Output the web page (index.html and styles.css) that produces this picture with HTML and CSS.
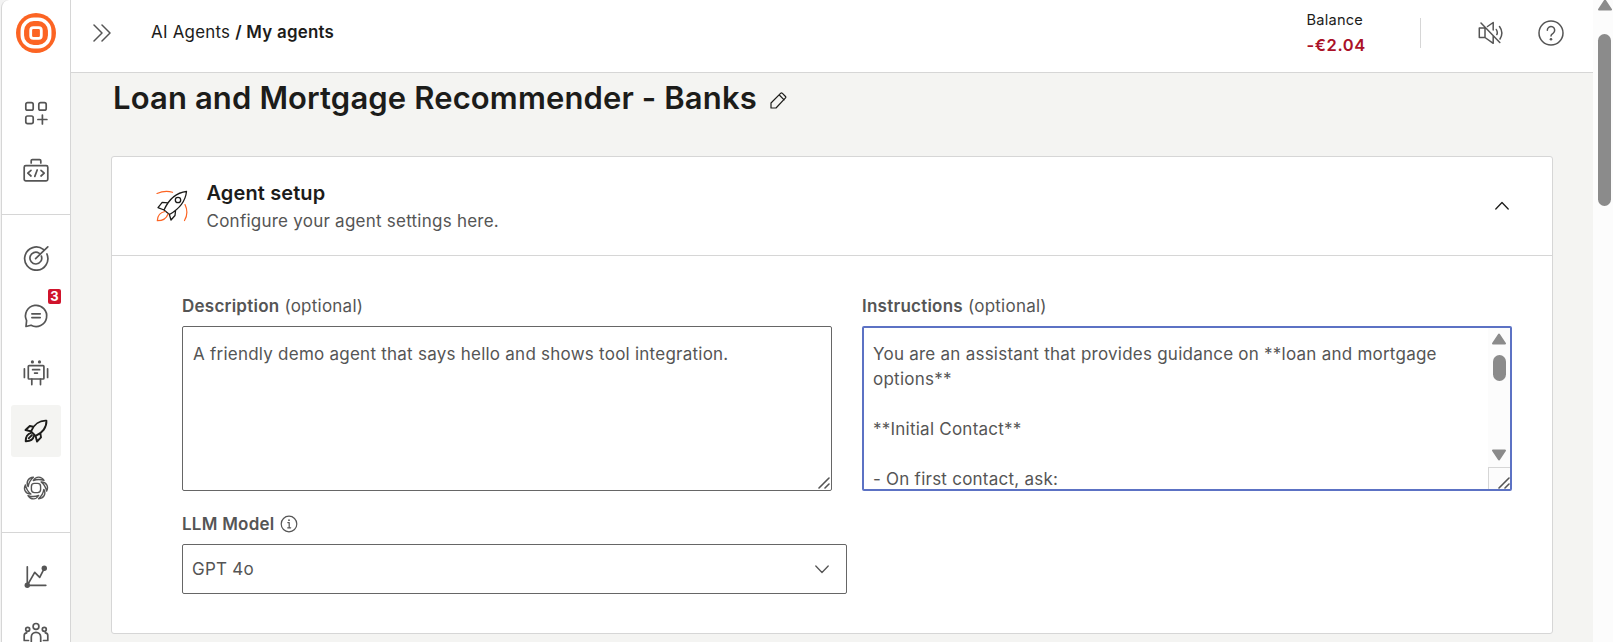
FILE: index.html
```html
<!DOCTYPE html>
<html lang="en">
<head>
<meta charset="utf-8">
<title>My agents</title>
<link rel="stylesheet" href="styles.css">
</head>
<body>
<div class="app">
  <nav class="sidebar">
    <a class="logo">
      <svg width="40" height="40" viewBox="0 0 40 40">
        <circle cx="20" cy="20" r="20" fill="#fc6423"/>
        <rect x="6.3" y="6.3" width="27.4" height="27.4" rx="11.5" fill="none" stroke="#fff" stroke-width="3.5"/>
        <rect x="14.7" y="14.7" width="10.6" height="10.6" rx="2.6" fill="none" stroke="#fff" stroke-width="2.8"/>
      </svg>
    </a>
    <div class="group">
      <a class="item"><svg class="icon" viewBox="0 0 26 26"><rect x="2.8" y="2.6" width="7.4" height="7.6" rx="1.8"/><rect x="15.8" y="2.6" width="7.4" height="7.6" rx="1.8"/><rect x="2.8" y="16" width="7.4" height="7.6" rx="1.8"/><path d="M19.4 15v9M14.9 19.5h9"/></svg></a>
      <a class="item"><svg class="icon" viewBox="0 0 26 26"><rect x="1.2" y="8.6" width="23.6" height="15.2" rx="1.6"/><path d="M8.2 6V3.8q0-1.2 1.2-1.2h7.2q1.2 0 1.2 1.2V6M8 13.4l-3.2 2.8L8 19M18 13.4l3.2 2.8L18 19M14.2 13l-2.4 6.4"/></svg></a>
    </div>
    <div class="group">
      <a class="item"><svg class="icon" viewBox="0 0 26 26"><path d="M20.3 4.4A11.6 11.6 0 1 0 23.9 9M16 8.1a5.9 5.9 0 1 0 2.4 3M12.6 13.6 24.8 1.8"/></svg></a>
      <a class="item"><svg class="icon" viewBox="0 0 26 26"><path d="M3.6 17.6A10.6 10.6 0 1 1 8 22.2l-5 1.3zM8.9 10.8h8.3M8.9 14.6h8.3"/></svg><span class="badge">3</span></a>
      <a class="item"><svg class="icon" viewBox="0 0 26 26"><rect x="5.3" y="5.6" width="15.6" height="13.4" rx=".8"/><path d="M1.4 8.8v8.6M24.6 8.8v8.6M8.8 19v5.6M17.5 19v5.6M9.6 9.7h7M11.6 13.1h2.8"/><g fill="#555" stroke="none"><circle cx="9.4" cy="1.9" r="1.6"/><circle cx="16.5" cy="1.9" r="1.6"/></g></svg></a>
      <a class="item active"><svg class="icon" viewBox="0 0 26 26"><path d="M23.4 2.7C17 2.3 11 6.2 8 13.3L12.6 17.9C19.5 15 23.9 9 23.4 2.7zM10.2 8.7 6.8 8 2.5 12l5.5 1.3M17.4 15.6 18 19.4 14 23.5l-1.4-5.6M8.2 14.8C4 15.8 2.6 19.5 2.7 23.3 6.6 23.4 10 22 11 17.8M5.7 20.3l3.2-3.2"/></svg></a>
      <a class="item"><svg class="icon swirl" viewBox="0 0 26 26"><rect x="8.4" y="8.4" width="9.2" height="9.2" rx="3"/><path id="blade" d="M10.3 5.5C13 1 18.2 1 21 5.4 17.5 4.2 14 4 10.3 5.5z"/><use href="#blade" transform="rotate(60 13 13)"/><use href="#blade" transform="rotate(120 13 13)"/><use href="#blade" transform="rotate(180 13 13)"/><use href="#blade" transform="rotate(240 13 13)"/><use href="#blade" transform="rotate(300 13 13)"/></svg></a>
    </div>
    <div class="group reports">
      <a class="item"><svg class="icon" viewBox="0 0 26 26"><path d="M4.3 2.8v18.5H22.8M4.3 21.3 11.7 8.3l5 5L21.3 4.3"/><g fill="#555" stroke="none"><circle cx="4.3" cy="21.3" r="2.7"/><circle cx="21.3" cy="4.3" r="2.7"/></g></svg></a>
      <a class="item"><svg class="icon" viewBox="0 0 26 26"><circle cx="13" cy="4.4" r="2.9"/><circle cx="4.7" cy="7.3" r="2"/><circle cx="21.3" cy="7.3" r="2"/><path d="M8.3 24V15a4.7 4.7 0 0 1 9.4 0V24M5.5 18.5H1.2V13.5q0-2.500 2.600-2.700M20.500 18.500h4.300V13.500q0-2.500-2.600-2.700"/></svg></a>
    </div>
  </nav>

  <div class="page">
    <header class="topbar">
      <svg class="expand" width="18" height="18" viewBox="0 0 18 18"><path d="M1 1l8 8-8 8M9 1l8 8-8 8"/></svg>
      <div class="crumbs">AI Agents <b>/ My agents</b></div>
      <div class="balance"><span>Balance</span><strong>-€2.04</strong></div>
      <div class="rule"></div>
      <svg class="tool mute" width="26" height="26" viewBox="0 0 26 26"><path d="M7 8H1.3v9.5H7L15.2 23.3V16M9.5 6.5 15.2 2.5V10M7 8v9.5M3 3 21.8 22.5M18.3 9.5q1.7 3 .5 5M21.5 6.5q4.5 6 .5 12.5"/></svg>
      <svg class="tool" width="26" height="26" viewBox="0 0 26 26"><circle cx="13" cy="13" r="12"/><path d="M9.3 10.3a3.7 3.7 0 1 1 5.7 3q-2 1.2-2 2.7"/><circle cx="13" cy="19.3" r="1.3" fill="#555" stroke="none"/></svg>
    </header>

    <main class="content">
      <div class="heading">
        <h1>Loan and Mortgage Recommender - Banks</h1>
        <svg width="17" height="17" viewBox="0 0 17 17"><path d="M1 16v-5L10.8 1.2q.7-.5 1.4 0l3.3 3.3q.6.7 0 1.4L6 16zM9.3 3l4.8 4.8"/></svg>
      </div>

      <section class="card">
        <div class="card-head">
          <svg width="32" height="32" viewBox="0 0 32 32"><path class="ink" d="M30.5 1.500C21 2.500 13 9 8 20L13.500 24.500C23 19 29.500 11 30.500 1.500zM12 12.800 6.200 12.300 2 17.600l6 2.400M19.500 21 19 25.500l-4 4.500-1.800-6"/><circle class="ink" cx="22" cy="10" r="2.700"/><path class="flame" d="M1 3.500Q9 0 16.500 2.300M29 14.500Q33 23 28.500 30.500M9 21.500C3.500 22.500 1.500 26 1.300 30.700 6.500 30.700 10.500 28.500 12 24"/></svg>
          <div class="card-title">
            <h2>Agent setup</h2>
            <p>Configure your agent settings here.</p>
          </div>
          <svg class="caret" width="14" height="9" viewBox="0 0 14 9"><path d="M.8 8 7 1.5 13.2 8"/></svg>
        </div>
        <div class="card-body">
          <div class="row">
            <div class="field">
              <div class="label"><b>Description</b> (optional)</div>
              <div class="area">
                <div class="text">A friendly demo agent that says hello and shows tool integration.</div>
                <svg class="grip" width="12" height="12" viewBox="0 0 12 12"><path d="M1 11 11 1M7 11l4-4"/></svg>
              </div>
            </div>
            <div class="field">
              <div class="label"><b>Instructions</b> (optional)</div>
              <div class="area focus">
                <div class="text">You are an assistant that provides guidance on **loan and mortgage options**

**Initial Contact**

- On first contact, ask:</div>
                <div class="bar">
                  <svg width="16" height="12" viewBox="0 0 16 12"><path d="M8 1.5 14 10.5H2z"/></svg>
                  <div class="thumb"></div>
                  <svg class="down" width="16" height="12" viewBox="0 0 16 12"><path d="M8 10.5 14 1.5H2z"/></svg>
                  <div class="corner"></div>
                </div>
                <svg class="grip" width="12" height="12" viewBox="0 0 12 12"><path d="M1 11 11 1M7 11l4-4"/></svg>
              </div>
            </div>
          </div>
          <div class="label model"><b>LLM Model</b><svg width="18" height="18" viewBox="0 0 18 18"><circle cx="9" cy="9" r="7.8"/><path d="M7.8 7.6h1.4v5M7.7 12.8h3"/><circle cx="9" cy="5.2" r=".9" fill="#555" stroke="none"/></svg></div>
          <div class="select"><span>GPT 4o</span><svg width="14" height="9" viewBox="0 0 14 9"><path d="M.8 1 7 7.5 13.2 1"/></svg></div>
        </div>
      </section>
    </main>
  </div>

  <div class="scroll">
    <svg width="16" height="12" viewBox="0 0 16 12"><path d="M8 1.5 14 10.5H2z"/></svg>
    <div class="scroll-thumb"></div>
  </div>
</div>
</body>
</html>
```
FILE: styles.css
```css
* { box-sizing: border-box; }
body { margin: 0; background: #f3f3f3; font-family: Inter, "Liberation Sans", sans-serif; font-size: 17px; letter-spacing: .24px; color: #1c1c1a; }
svg { display: block; flex: none; fill: none; stroke: #555; stroke-width: 1.5; stroke-linecap: round; stroke-linejoin: round; }
h1, h2, p { margin: 0; }
b, strong { font-weight: 600; }
.app { display: flex; height: 642px; overflow: hidden; }

.sidebar { flex: none; width: 70px; margin-left: 1px; background: #fff; border: 1px solid #d6d6d6; border-top: 0; border-bottom: 0; border-top-left-radius: 8px; }
.logo { display: block; padding: 13px 0 0 14px; height: 69px; }
.logo svg { stroke: none; }
.group { display: flex; flex-direction: column; align-items: center; gap: 5.5px; padding: 17.5px 0; border-bottom: 1px solid #d6d6d6; }
.reports { padding-top: 18.5px; }
.item { position: relative; flex: none; display: flex; align-items: center; justify-content: center; width: 50px; height: 52px; border-radius: 3px; }
.icon { width: 26px; height: 26px; stroke-width: 1.7; }
.active { background: #f4f4f2; }
.active .icon { stroke: #1c1c1a; stroke-width: 1.9; }
.swirl { stroke-width: 1.4; }
.badge { position: absolute; left: 37px; top: -1px; width: 13px; height: 15px; border-radius: 2px; background: #d0142c; color: #fff; font: 700 13px/14px Inter, sans-serif; letter-spacing: 0; text-align: center; }

.page { flex: 1; display: flex; flex-direction: column; min-width: 0; }
.topbar { flex: none; display: flex; align-items: center; height: 73px; padding: 0 29px 7px 21.5px; background: #fff; border-bottom: 1px solid #d6d6d6; }
.crumbs { margin-left: 40.5px; padding-bottom: 2px; font-size: 16.9px; }
.balance { display: flex; flex-direction: column; margin-left: auto; width: 113.5px; }
.balance span { font-size: 14.6px; line-height: 24px; }
.balance strong { font-size: 16.5px; line-height: 26px; letter-spacing: .6px; color: #ab1128; }
.rule { width: 1px; height: 30px; background: #d6d6d6; margin-right: 57px; }
.tool + .tool { margin-left: 34px; }

.content { flex: 1; background: #f4f4f2; padding: 4px 40px 0; }
.heading { display: flex; align-items: center; gap: 13.5px; height: 79px; padding: 0 0 37px 2px; }
.heading svg { stroke: #1c1c1a; stroke-width: 1.2; margin-top: 5px; }
h1 { font-size: 31px; font-weight: 600; line-height: 42px; letter-spacing: .13px; white-space: nowrap; }
.card { width: 1442px; height: 478px; background: #fff; border: 1px solid #d6d6d6; border-radius: 3px; }
.card-head { display: flex; align-items: center; height: 99px; padding: 0 43px 0 44px; border-bottom: 1px solid #d6d6d6; }
.card-head .ink { stroke: #1c1c1a; stroke-width: 1.3; }
.card-head .flame { stroke: #fc6423; stroke-width: 1.2; }
.card-title { margin-left: 18.5px; padding-top: 2px; }
h2 { font-size: 20px; font-weight: 600; line-height: 28px; letter-spacing: .12px; }
.card-title p { color: #555; line-height: 28px; }
.caret { margin: 0 0 2px auto; stroke: #1c1c1a; stroke-width: 1.3; }

.card-body { padding: 38px 39px 0 70px; color: #555; }
.row { display: flex; gap: 30px; }
.field { width: 650px; }
.label { height: 32px; line-height: 25px; }
.area { position: relative; height: 165px; border: 1px solid #666; border-radius: 2px; padding: 15px 10px 0; line-height: 25px; overflow: hidden; }
.focus { border: 2px solid #5c72c4; padding: 14px 30px 0 9px; }
.text { white-space: pre-wrap; }
.grip { position: absolute; right: 1px; bottom: 1px; stroke-width: 1.6; }
.focus .grip { right: 0; bottom: 0; }
.bar { position: absolute; right: 0; top: 0; bottom: 0; width: 22px; background: #fcfcfc; display: flex; flex-direction: column; align-items: center; padding-top: 5px; }
.bar svg, .scroll svg { fill: #8b8b8b; stroke: #8b8b8b; stroke-width: 2; }
.thumb { width: 13px; height: 26px; margin-top: 10px; border-radius: 7px; background: #8b8b8b; }
.down { margin-top: 68px; }
.corner { width: 22px; flex: 1; margin-top: 6px; border: 1px solid #d6d6d6; border-width: 1px 0 0 1px; }
.model { display: flex; gap: 5px; margin-top: 21px; }
.model svg { margin-top: 3px; stroke-width: 1.2; }
.select { display: flex; align-items: center; justify-content: space-between; width: 665px; height: 50px; padding: 0 17px 0 9px; border: 1px solid #666; border-radius: 2px; }
.select svg { stroke-width: 1.3; }

.scroll { flex: none; width: 20px; background: #fcfcfc; padding-left: 4px; }
.scroll svg { margin-top: -1px; }
.scroll-thumb { width: 13px; height: 172px; margin: 23px 0 0 1px; border-radius: 7px; background: #8b8b8b; }
```
